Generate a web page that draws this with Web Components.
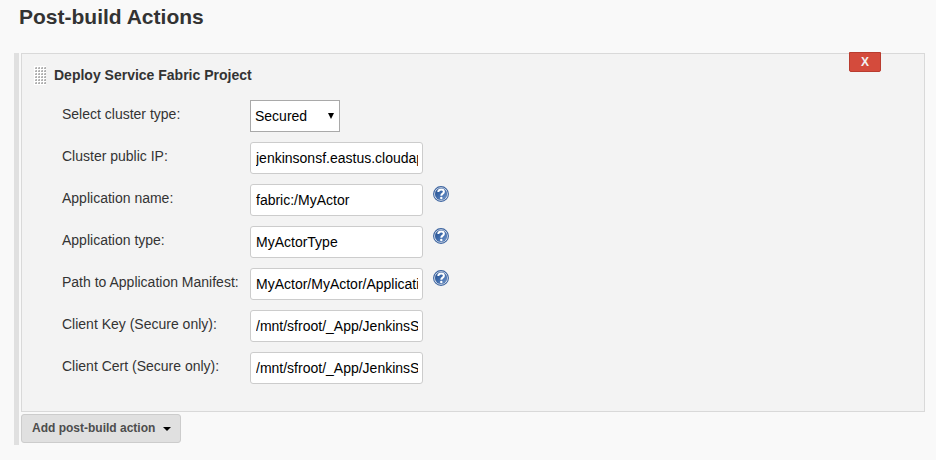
<!DOCTYPE html>
<html lang="en">
<head>
<meta charset="utf-8">
<title>Post-build Actions</title>
<style>
  body {
    margin: 0;
    background: #f9f9f9;
    color: #333;
    font: 14px/20px "Liberation Sans", Arial, sans-serif;
  }
</style>
</head>
<body>
<build-section heading="Post-build Actions">
  <action-panel heading="Deploy Service Fabric Project">
    <select-row label="Select cluster type:" options="Secured,Unsecured"></select-row>
    <text-row label="Cluster public IP:" value="jenkinsonsf.eastus.cloudapp.azure.com"></text-row>
    <text-row label="Application name:" value="fabric:/MyActor" help></text-row>
    <text-row label="Application type:" value="MyActorType" help></text-row>
    <text-row label="Path to Application Manifest:" value="MyActor/MyActor/ApplicationManifest.xml" help></text-row>
    <text-row label="Client Key (Secure only):" value="/mnt/sfroot/_App/JenkinsSF.key"></text-row>
    <text-row label="Client Cert (Secure only):" value="/mnt/sfroot/_App/JenkinsSF.crt"></text-row>
  </action-panel>
  <menu-button>Add post-build action</menu-button>
</build-section>

<script>
  class BaseElement extends HTMLElement {
    connectedCallback() {
      if (this.shadowRoot) return;
      this.attachShadow({ mode: "open" }).innerHTML = this.render();
      this.fill(this.shadowRoot);
    }
    fill() {}
  }

  customElements.define("build-section", class extends BaseElement {
    render() {
      return `<style>
        :host { display: block; padding: 5px 11px 15px 14px; }
        h2 { margin: 0 0 24px 5px; font-size: 21px; line-height: 24px; font-weight: bold; }
        .body {
          display: flex; flex-direction: column; align-items: flex-start; gap: 2px;
          border-left: 5px solid #e0e0e0; padding: 0 0 2px 2px;
        }
        ::slotted(action-panel) { align-self: stretch; }
      </style>
      <h2></h2>
      <div class="body"><slot></slot></div>`;
    }
    fill(root) { root.querySelector("h2").textContent = this.getAttribute("heading"); }
  });

  customElements.define("drag-grip", class extends BaseElement {
    render() {
      return `<style>
        :host { display: block; width: 12px; height: 19px; }
        svg { display: block; }
      </style>
      <svg width="12" height="19" aria-hidden="true" shape-rendering="crispEdges">
        <defs><pattern id="dots" x="1" y="1" width="3" height="3" patternUnits="userSpaceOnUse">
          <path d="M0 0h2v2H0z" fill="#d0d0d0"/><path d="M1 0h1v2H0V1h1z" fill="#b0b0b0"/>
        </pattern></defs>
        <path d="M0 0h12v19H0z" fill="#fff"/><path d="M1 1h11v17H1z" fill="url(#dots)"/>
      </svg>`;
    }
  });

  customElements.define("action-panel", class extends BaseElement {
    render() {
      return `<style>
        :host {
          display: block; position: relative; padding: 11px 12px 27px 12px;
          background: #f3f3f3; border: 1px solid #d9d9d9;
        }
        header { display: flex; align-items: center; gap: 8px; }
        h3 { margin: 0; font-size: 14px; line-height: 20px; font-weight: bold; }
        .rows { display: grid; gap: 10px; margin: 15px 0 0 28px; }
        .remove {
          position: absolute; top: -2px; right: 43px; width: 32px; height: 20px; padding: 0;
          background: #d44b3c; color: #f2f2f2; border: 1px solid #b93c2f; border-radius: 0 0 2px 2px;
          font: bold 12px/18px "Liberation Sans", Arial, sans-serif;
        }
      </style>
      <header><drag-grip></drag-grip><h3></h3></header>
      <button class="remove" type="button" title="Delete">X</button>
      <div class="rows"><slot></slot></div>`;
    }
    fill(root) { root.querySelector("h3").textContent = this.getAttribute("heading"); }
  });

  const rowStyle = `
    :host { display: grid; grid-template-columns: 188px auto 1fr; align-items: start; }
    label { padding-top: 4px; line-height: 20px; white-space: nowrap; }
    input, select {
      box-sizing: border-box; height: 32px; margin: 0; background: #fff; color: #000;
      font: 14px/20px "Liberation Sans", Arial, sans-serif;
    }`;

  customElements.define("text-row", class extends BaseElement {
    render() {
      return `<style>${rowStyle}
        input { width: 173px; padding: 4px 4px 4px 5px; border: 1px solid #ccc; border-radius: 3px; }
        help-link { margin: 0 0 0 10px; padding-top: 2px; }
      </style>
      <label for="field"></label><input id="field" type="text">
      ${this.hasAttribute("help") ? "<help-link></help-link>" : ""}`;
    }
    fill(root) {
      root.querySelector("label").textContent = this.getAttribute("label");
      root.querySelector("input").value = this.getAttribute("value");
    }
  });

  customElements.define("select-row", class extends BaseElement {
    render() {
      return `<style>${rowStyle}
        .box { display: grid; align-items: center; }
        .box > * { grid-area: 1 / 1; }
        select { appearance: none; width: 90px; padding: 0 16px 0 4px; border: 1px solid #a9a9a9; border-radius: 0; }
        svg { justify-self: end; margin-right: 6px; pointer-events: none; }
      </style>
      <label for="field"></label>
      <div class="box"><select id="field"></select>
        <svg width="6" height="6" aria-hidden="true"><path d="M0 0h6L3 6z" fill="#000"/></svg></div>`;
    }
    fill(root) {
      root.querySelector("label").textContent = this.getAttribute("label");
      for (const name of this.getAttribute("options").split(",")) {
        root.querySelector("select").add(new Option(name));
      }
    }
  });

  customElements.define("help-link", class extends BaseElement {
    render() {
      return `<style>
        :host { display: block; width: 16px; height: 16px; }
        a, svg { display: block; }
      </style>
      <a href="#help" aria-label="Help"><svg width="16" height="16" viewBox="0 0 16 16">
        <defs><linearGradient id="g" x1="0" y1="0" x2="1" y2="1">
          <stop offset="0" stop-color="#244e8c"/><stop offset=".5" stop-color="#3f6cad"/><stop offset="1" stop-color="#7598ca"/>
        </linearGradient></defs>
        <circle cx="8" cy="8" r="7.4" fill="#fff" stroke="#3b639f" stroke-width="1.1"/>
        <circle cx="8" cy="8" r="6" fill="url(#g)" stroke="#2f5795" stroke-width=".4"/>
        <path d="M5.300 6.100C5.300 4.300 6.500 3.400 8.100 3.400s2.800.8 2.800 2.400C10.900 7.700 8.300 7.600 8.300 9.700" fill="none" stroke="#fff" stroke-width="2"/>
        <circle cx="8.300" cy="12" r="1.200" fill="#fff"/>
      </svg></a>`;
    }
  });

  customElements.define("menu-button", class extends BaseElement {
    render() {
      return `<style>
        :host { display: block; }
        button {
          display: flex; align-items: center; gap: 8px; height: 29px; padding: 0 9px 2px 10px;
          background: #e0e0e0; color: #4d4d4d; border: 1px solid #ccc; border-radius: 3px;
          font: bold 12px/20px "Liberation Sans", Arial, sans-serif;
        }
        svg { margin-top: 3px; }
      </style>
      <button type="button" aria-haspopup="menu"><slot></slot>
        <svg width="8" height="4" aria-hidden="true"><path d="M0 0h8L4 4z" fill="#000"/></svg></button>`;
    }
  });
</script>
</body>
</html>
